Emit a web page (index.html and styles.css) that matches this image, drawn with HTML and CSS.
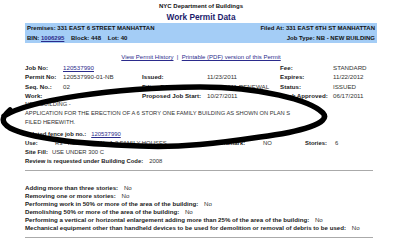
FILE: index.html
```html
<!DOCTYPE html>
<html lang="en">
<head>
    <meta charset="UTF-8">
    <title>Work Permit Data</title>
    <link rel="stylesheet" href="styles.css">
</head>
<body>
    <div class="page">
        <div class="agency">NYC Department of Buildings</div>
        <h1>Work Permit Data</h1>

        <div class="band">
            <div class="band-row">
                <span>Premises: 331 EAST 6 STREET MANHATTAN</span>
                <span>Filed At: 331 EAST 6TH ST MANHATTAN</span>
            </div>
            <div class="band-row">
                <span>BIN: <a href="#">1006295</a> &nbsp;&nbsp; Block: 448 &nbsp;&nbsp; Lot: 40</span>
                <span>Job Type: NB - NEW BUILDING</span>
            </div>
        </div>

        <div class="links">
            <a href="#">View Permit History</a> &nbsp;|&nbsp; <a href="#">Printable (PDF) version of this Permit</a>
        </div>

        <div class="permit">
            <b>Job No:</b><span><a href="#">120537990</a></span><b></b><span></span><b>Fee:</b><span>STANDARD</span>
            <b>Permit No:</b><span>120537990-01-NB</span><b>Issued:</b><span>11/23/2011</span><b>Expires:</b><span>11/22/2012</span>
            <b>Seq. No.:</b><span>02</span><b>Filing Date:</b><span>11/23/2011 RENEWAL</span><b>Status:</b><span>ISSUED</span>
            <b>Work:</b><span></span><b>Proposed Job Start:</b><span>10/27/2011</span><b>Work Approved:</b><span>06/17/2011</span>
        </div>

        <div class="desc">
            <div>NEW BUILDING -</div>
            <div>APPLICATION FOR THE ERECTION OF A 6 STORY ONE FAMILY BUILDING AS SHOWN ON PLAN S</div>
            <div>FILED HEREWITH.</div>
        </div>

        <div class="facts">
            <div><b>Related fence job no.:</b><a class="val-fence" href="#">120537990</a></div>
            <div class="use-row">
                <b class="use-label">Use:</b>
                <span class="use-value">R3 - RESIDENTIAL: 1-2 FAMILY HOUSES</span>
                <b class="land-label">Landmark:</b>
                <span class="land-value">NO</span>
                <b class="stories-label">Stories:</b>
                <span>6</span>
            </div>
            <div><b>Site Fill:</b><span class="val-fill">USE UNDER 300 C</span></div>
            <div><b>Review is requested under Building Code:</b><span class="val-code">2008</span></div>
        </div>

        <hr class="rule-top">

        <div class="questions">
            <div><b>Adding more than three stories:</b> <span>No</span></div>
            <div><b>Removing one or more stories:</b> <span>No</span></div>
            <div><b>Performing work in 50% or more of the area of the building:</b> <span>No</span></div>
            <div><b>Demolishing 50% or more of the area of the building:</b> <span>No</span></div>
            <div><b>Performing a vertical or horizontal enlargement adding more than 25% of the area of the building:</b> <span>No</span></div>
            <div><b>Mechanical equipment other than handheld devices to be used for demolition or removal of debris to be used:</b> <span>No</span></div>
        </div>

        <hr class="rule-bottom">
    </div>

    <svg class="scribble" width="400" height="241" viewBox="0 0 400 241">
        <path d="M4 116 C 30 100, 110 88, 200 87 C 260 87, 310 100, 323 113 C 332 123, 300 132, 260 137 C 220 143, 180 148, 140 146 C 80 144, 30 138, 10 128 C 0 122, 2 117, 10 110"
              fill="none" stroke="#000" stroke-width="5.5" stroke-linecap="round"/>
    </svg>
</body>
</html>
```

FILE: styles.css
```css
body {
    margin: 0;
    font-family: "Liberation Sans", Arial, sans-serif;
    font-size: 6.2px;
    color: #333;
    background-color: #fff;
}
a {
    color: #2b2b8c;
}
b {
    font-weight: bold;
    color: #222;
}
.page {
    padding: 2px 23px 0 25px;
}
.agency {
    text-align: center;
    font-weight: bold;
    font-size: 6px;
    color: #111;
    line-height: 9px;
}
h1 {
    margin: 0;
    text-align: center;
    font-size: 8.3px;
    line-height: 12px;
    color: #1c1c6b;
}
.band {
    background-color: #a4cdf6;
    font-weight: bold;
    font-size: 6px;
    color: #111;
    padding: 0 2px;
}
.band-row {
    display: flex;
    justify-content: space-between;
    line-height: 10px;
}
.links {
    margin-top: 10px;
    text-align: center;
    line-height: 9px;
    font-size: 6px;
    color: #2b2b8c;
}
.permit {
    margin-top: 1px;
    display: grid;
    grid-template-columns: 38px 79px 65px 73px 53px auto;
    line-height: 9.3px;
    white-space: nowrap;
}
.desc {
    font-size: 5.75px;
    line-height: 9px;
}
.facts {
    margin-top: 3px;
    font-size: 5.9px;
    line-height: 8.8px;
    white-space: nowrap;
}
.val-fence {
    margin-left: 5px;
}
.use-row {
    display: flex;
}
.use-label {
    width: 30px;
    flex: none;
}
.use-value {
    width: 160px;
    flex: none;
    overflow: hidden;
}
.land-label {
    width: 48px;
    flex: none;
}
.land-value {
    width: 42px;
    flex: none;
}
.stories-label {
    width: 30px;
    flex: none;
}
.val-fill {
    margin-left: 4px;
}
.val-code {
    margin-left: 6px;
}
hr {
    border: 0;
    border-top: 1px solid #aaa;
    margin: 0 4px 0 0;
}
.rule-top {
    margin-top: 5px;
    margin-bottom: 13px;
}
.rule-bottom {
    margin-top: 5px;
}
.questions {
    font-size: 6.15px;
    line-height: 7.9px;
    white-space: nowrap;
}
.questions span {
    margin-left: 4px;
}
.scribble {
    position: absolute;
    left: 0;
    top: 0;
    pointer-events: none;
}
```
